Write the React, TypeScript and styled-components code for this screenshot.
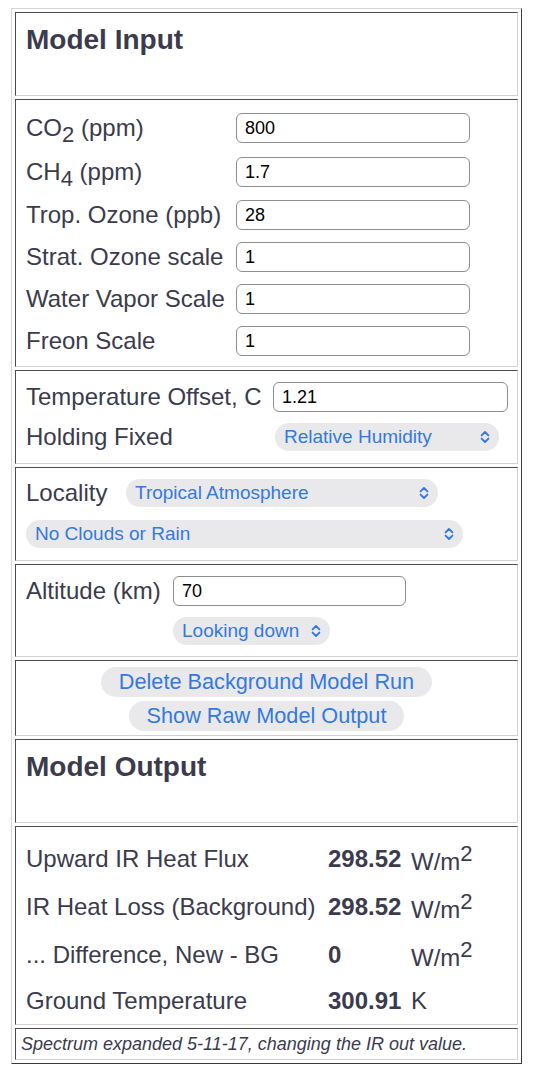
import React from "react";
import styled, { createGlobalStyle } from "styled-components";

const GlobalStyle = createGlobalStyle`
  body {
    margin: 0;
    background: #ffffff;
    font-family: "Liberation Sans", Arial, Helvetica, sans-serif;
    color: #3b3b4d;
  }
`;

const Chevron = () => (
  <svg width="10" height="14" viewBox="0 0 10 14" fill="none">
    <path
      d="M1.6 5.4 L5 2 L8.4 5.4 M1.6 8.6 L5 12 L8.4 8.6"
      stroke="#3479df"
      strokeWidth="1.9"
      strokeLinecap="round"
      strokeLinejoin="round"
    />
  </svg>
);

const inputs = [
  { label: "CO", sub: "2", tail: " (ppm)", value: "800", h: 44 },
  { label: "CH", sub: "4", tail: " (ppm)", value: "1.7", h: 44 },
  { label: "Trop. Ozone (ppb)", value: "28", h: 42 },
  { label: "Strat. Ozone scale", value: "1", h: 42 },
  { label: "Water Vapor Scale", value: "1", h: 42 },
  { label: "Freon Scale", value: "1", h: 42 },
];

const outputs = [
  { label: "Upward IR Heat Flux", value: "298.52", unit: "W/m", sup: "2", h: 48 },
  { label: "IR Heat Loss (Background)", value: "298.52", unit: "W/m", sup: "2", h: 48 },
  { label: "... Difference, New - BG", value: "0", unit: "W/m", sup: "2", h: 48 },
  { label: "Ground Temperature", value: "300.91", unit: "K", h: 44 },
];

const App = () => {
  return (
    <Page>
      <GlobalStyle />
      <Frame>
        <Cell $h={84} $pad="11px 10px 0">
          <Heading>Model Input</Heading>
        </Cell>

        <Cell $h={268} $pad="6px 0 0 10px">
          {inputs.map((row) => (
            <FieldRow key={row.label} $h={row.h}>
              <Label $w={210}>
                {row.label}
                {row.sub && <Sub>{row.sub}</Sub>}
                {row.tail}
              </Label>
              <TextInput $w={234} defaultValue={row.value} />
            </FieldRow>
          ))}
        </Cell>

        <Cell $h={94} $pad="7px 0 0 10px">
          <FieldRow $h={38}>
            <Label $w={247}>Temperature Offset, C</Label>
            <TextInput $w={235} defaultValue="1.21" />
          </FieldRow>
          <FieldRow $h={42}>
            <Label $w={249}>Holding Fixed</Label>
            <SelectBox $w={224}>
              <span>Relative Humidity</span>
              <Chevron />
            </SelectBox>
          </FieldRow>
        </Cell>

        <Cell $h={94} $pad="6px 0 0 10px">
          <FieldRow $h={38}>
            <Label $w={100}>Locality</Label>
            <SelectBox $w={312}>
              <span>Tropical Atmosphere</span>
              <Chevron />
            </SelectBox>
          </FieldRow>
          <FieldRow $h={44}>
            <SelectBox $w={437}>
              <span>No Clouds or Rain</span>
              <Chevron />
            </SelectBox>
          </FieldRow>
        </Cell>

        <Cell $h={93} $pad="7px 0 0 10px">
          <FieldRow $h={38}>
            <Label $w={147}>Altitude (km)</Label>
            <TextInput $w={233} defaultValue="70" />
          </FieldRow>
          <FieldRow $h={42}>
            <Label $w={147} />
            <SelectBox $w={157}>
              <span>Looking down</span>
              <Chevron />
            </SelectBox>
          </FieldRow>
        </Cell>

        <Cell $h={76} $pad="6px 0 0">
          <ButtonStack>
            <PillButton>Delete Background Model Run</PillButton>
            <PillButton>Show Raw Model Output</PillButton>
          </ButtonStack>
        </Cell>

        <Cell $h={84} $pad="11px 10px 0">
          <Heading>Model Output</Heading>
        </Cell>

        <Cell $h={199} $pad="8px 0 0 10px">
          {outputs.map((row) => (
            <OutputRow key={row.label} $h={row.h}>
              <OutLabel>{row.label}</OutLabel>
              <OutValue>{row.value}</OutValue>
              <OutUnit $shift={row.sup ? 6 : 0}>
                {row.unit}
                {row.sup && <Sup>{row.sup}</Sup>}
              </OutUnit>
            </OutputRow>
          ))}
        </Cell>

        <Cell $h={32} $pad="2px 0 0 5px">
          <Note>Spectrum expanded 5-11-17, changing the IR out value.</Note>
        </Cell>
      </Frame>
    </Page>
  );
};

const Page = styled.div`
  padding: 8px 0 29px 11px;
`;

const Frame = styled.div`
  box-sizing: border-box;
  width: 511px;
  padding: 3px;
  display: flex;
  flex-direction: column;
  gap: 3px;

  border: 1px solid;
  border-color: #d6d6d6 #3a3a3a #3a3a3a #d6d6d6;
`;

const Cell = styled.div<{ $h: number; $pad: string }>`
  box-sizing: border-box;
  height: ${(p) => p.$h}px;
  padding: ${(p) => p.$pad};

  border: 1px solid;
  border-color: #4a4a4a #d2d2d2 #d2d2d2 #4a4a4a;
`;

const Heading = styled.h3`
  margin: 0;

  font-size: 28px;
  font-weight: 700;
  line-height: 32px;
  color: #3b3b4d;
`;

const FieldRow = styled.div<{ $h: number }>`
  display: flex;
  align-items: center;
  height: ${(p) => p.$h}px;
`;

const Label = styled.span<{ $w: number }>`
  flex: none;
  width: ${(p) => p.$w}px;

  font-size: 24px;
  line-height: 28px;
  color: #3b3b4d;
  white-space: nowrap;
`;

const Sub = styled.sub`
  font-size: 0.92em;
  vertical-align: -0.26em;
  line-height: 0;
`;

const Sup = styled.sup`
  font-size: 0.92em;
  vertical-align: 0.4em;
  line-height: 0;
`;

const TextInput = styled.input<{ $w: number }>`
  box-sizing: border-box;
  width: ${(p) => p.$w}px;
  height: 30px;
  padding: 0 8px;

  font-family: "Liberation Sans", Arial, sans-serif;
  font-size: 18px;
  color: #000000;

  background: #ffffff;
  border: 1px solid #8d8d92;
  border-radius: 6px;
  outline: none;
`;

const SelectBox = styled.div<{ $w: number }>`
  box-sizing: border-box;
  display: flex;
  align-items: center;
  justify-content: space-between;
  width: ${(p) => p.$w}px;
  height: 28px;
  padding: 0 9px 0 9px;

  font-size: 19px;
  color: #3479df;
  white-space: nowrap;

  background: #e9e9eb;
  border-radius: 14px;
`;

const ButtonStack = styled.div`
  display: flex;
  flex-direction: column;
  align-items: center;
  gap: 4px;
`;

const PillButton = styled.button`
  height: 30px;
  padding: 0 18px;

  font-family: "Liberation Sans", Arial, sans-serif;
  font-size: 21.7px;
  color: #3479df;
  white-space: nowrap;

  background: #e9e9eb;
  border: none;
  border-radius: 15px;
`;

const OutputRow = styled.div<{ $h: number }>`
  display: grid;
  grid-template-columns: 302px 83px auto;
  align-items: center;
  height: ${(p) => p.$h}px;

  font-size: 24px;
  color: #3b3b4d;
`;

const OutLabel = styled.span`
  white-space: nowrap;
`;

const OutValue = styled.span`
  font-weight: 700;
`;

const OutUnit = styled.span<{ $shift: number }>`
  margin-top: ${(p) => p.$shift}px;
  line-height: 28px;
`;

const Note = styled.div`
  font-size: 18px;
  font-style: italic;
  line-height: 26px;
  color: #3b3b4d;
  white-space: nowrap;
`;

export default App;
